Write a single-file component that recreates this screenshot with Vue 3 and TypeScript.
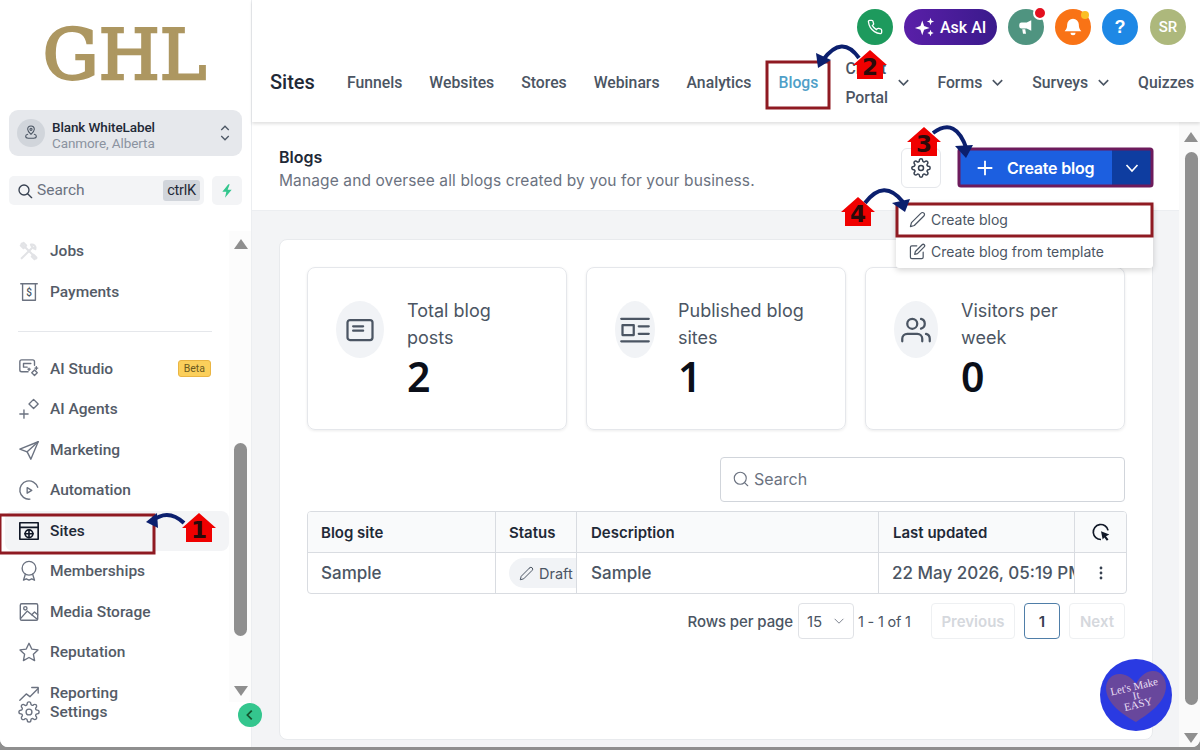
<template>
  <div class="window">
    <div class="app">
      <aside class="sidebar">
        <div class="logo">GHL</div>

        <div class="location">
          <span class="loc-avatar">
            <svg viewBox="0 0 24 24" class="ico-16"><path d="M12 14s5-4 5-7.500a5 5 0 0 0-10 0C7 10 12 14 12 14z" /><circle cx="12" cy="6.500" r="1.600" /><path d="M7 14c-2 .6-3 1.600-3 3 0 2 2 3 4 3h8c2 0 4-1 4-3 0-1.400-1-2.400-3-3" /></svg>
          </span>
          <div class="loc-text">
            <div class="loc-name">Blank WhiteLabel</div>
            <div class="loc-city">Canmore, Alberta</div>
          </div>
          <svg viewBox="0 0 16 24" class="loc-arrows"><path d="M3 8l5-5 5 5M3 16l5 5 5-5" /></svg>
        </div>

        <div class="search-row">
          <div class="side-search">
            <svg viewBox="0 0 24 24" class="ico-16 dark"><circle cx="10.500" cy="10.500" r="7.500" /><path d="M16 16l6 6" /></svg>
            <span class="side-search-label">Search</span>
            <span class="kbd">ctrlK</span>
          </div>
          <div class="bolt">
            <svg viewBox="0 0 24 24" width="16" height="16"><path d="M14 2L5 13h6l-2 9 10-12h-6l3-8z" fill="#34c68e" /></svg>
          </div>
        </div>

        <div class="side-scroll">
          <nav class="side-nav">
            <template v-for="item in navItems" :key="item.label">
              <div v-if="item.divider" class="side-divider"></div>
              <a class="nav-item" :class="{ active: item.active, pale: item.pale, last: item.label === 'Settings' }">
                <svg viewBox="0 0 24 24" class="nav-ico">
                  <path v-for="d in item.paths" :key="d" :d="d" />
                  <circle v-for="c in item.circles" :key="c.join()" :cx="c[0]" :cy="c[1]" :r="c[2]" />
                  <text v-if="item.glyph" x="12" y="16" class="ico-glyph">{{ item.glyph }}</text>
                </svg>
                <span>{{ item.label }}</span>
                <span v-if="item.badge" class="beta">{{ item.badge }}</span>
              </a>
            </template>
          </nav>
          <div class="side-bar">
            <span class="tri up"></span>
            <span class="side-thumb"></span>
            <span class="tri down"></span>
          </div>
        </div>
      </aside>

      <main class="main">
        <header class="header">
          <div class="top-icons">
            <span class="round phone">
              <svg viewBox="0 0 24 24" width="16" height="16"><path d="M22 16.920v3a2 2 0 0 1-2.180 2 19.790 19.790 0 0 1-8.630-3.070 19.500 19.500 0 0 1-6-6 19.790 19.790 0 0 1-3.070-8.670A2 2 0 0 1 4.110 2h3a2 2 0 0 1 2 1.720 12.840 12.840 0 0 0 .7 2.810 2 2 0 0 1-.45 2.110L8.090 9.910a16 16 0 0 0 6 6l1.270-1.270a2 2 0 0 1 2.110-.45 12.840 12.840 0 0 0 2.810.7A2 2 0 0 1 22 16.920z" fill="none" stroke="#fff" stroke-width="2" /></svg>
            </span>
            <span class="ask-ai">
              <svg viewBox="0 0 24 24" width="22" height="22" fill="#fff"><path d="M9 5l2 6 6 2-6 2-2 6-2-6-6-2 6-2z" /><path d="M18 2l1 3 3 1-3 1-1 3-1-3-3-1 3-1zM18 15l1 2.500 2.500 1-2.500 1-1 2.500-1-2.500-2.500-1 2.500-1z" /></svg>
              Ask AI
            </span>
            <span class="round mega">
              <svg viewBox="0 0 24 24" width="18" height="18" fill="#fff"><path d="M19 3v14l-6-3H6a3 3 0 0 1-3-3V9a3 3 0 0 1 3-3h7z" /><path d="M7 15h4l1 6H8z" /></svg>
              <i class="dot red"></i>
            </span>
            <span class="round bell">
              <svg viewBox="0 0 24 24" width="20" height="20" fill="#fff"><path d="M12 2a7 7 0 0 0-7 7c0 5-2 7-3 8h20c-1-1-3-3-3-8a7 7 0 0 0-7-7z" /><path d="M9 19a3 3 0 0 0 6 0z" /></svg>
              <i class="dot yellow"></i>
            </span>
            <span class="round help">?</span>
            <span class="round user">SR</span>
          </div>
          <div class="tabs">
            <span class="tabs-title">Sites</span>
            <a v-for="tab in tabs" :key="tab.label" class="tab" :class="{ current: tab.label === 'Blogs' }" :style="tab.width ? { width: tab.width + 'px' } : undefined">
              <span>{{ tab.label }}</span>
              <svg v-if="tab.menu" viewBox="0 0 16 16" class="tab-chev"><path d="M3 5.500l5 5 5-5" /></svg>
            </a>
          </div>
        </header>

        <div class="scroller">
          <div class="content">
            <section class="page-head">
              <div>
                <h1>Blogs</h1>
                <p>Manage and oversee all blogs created by you for your business.</p>
              </div>
              <div class="head-actions">
                <button class="gear-btn">
                  <svg viewBox="0 0 24 24" class="ico-20 dark"><circle cx="12" cy="12" r="3" /><path :d="gear" /></svg>
                </button>
                <div class="create">
                  <button class="create-main">
                    <svg viewBox="0 0 24 24" width="22" height="22"><path d="M12 4v16M4 12h16" stroke="#fff" stroke-width="2" fill="none" /></svg>
                    Create blog
                  </button>
                  <button class="create-more">
                    <svg viewBox="0 0 16 16" width="16" height="16"><path d="M2.500 5l5.500 6 5.500-6" stroke="#fff" stroke-width="1.600" fill="none" /></svg>
                  </button>
                </div>
                <div class="menu">
                  <a class="menu-item">
                    <svg viewBox="0 0 24 24" class="ico-17"><path d="M17 3a2.830 2.830 0 1 1 4 4L7.500 20.500 2 22l1.500-5.500L17 3z" /></svg>
                    Create blog
                  </a>
                  <a class="menu-item">
                    <svg viewBox="0 0 24 24" class="ico-17"><path d="M11 4H4a2 2 0 0 0-2 2v14a2 2 0 0 0 2 2h14a2 2 0 0 0 2-2v-7" /><path d="M18.500 2.500a2.120 2.120 0 0 1 3 3L12 15l-4 1 1-4 9.500-9.500z" /></svg>
                    Create blog from template
                  </a>
                </div>
              </div>
            </section>

            <section class="panel">
              <div class="stats">
                <div v-for="stat in stats" :key="stat.title" class="stat">
                  <span class="stat-ico" :style="{ width: stat.iconWidth + 'px' }">
                    <svg viewBox="0 0 24 24" class="ico-30">
                      <path v-for="d in stat.paths" :key="d" :d="d" />
                      <circle v-if="stat.circle" cx="9" cy="7" r="4" />
                    </svg>
                  </span>
                  <div class="stat-text">
                    <div class="stat-title">{{ stat.title }}</div>
                    <div class="stat-value">{{ stat.value }}</div>
                  </div>
                </div>
              </div>

              <div class="search-wrap">
                <div class="search-box">
                  <svg viewBox="0 0 24 24" class="ico-18 grey"><circle cx="11" cy="11" r="8" /><path d="M21 21l-4.300-4.300" /></svg>
                  <span>Search</span>
                </div>
              </div>

              <table class="blogs">
                <colgroup>
                  <col style="width: 188px" />
                  <col style="width: 81px" />
                  <col style="width: 302px" />
                  <col style="width: 196px" />
                  <col style="width: 51px" />
                </colgroup>
                <thead>
                  <tr>
                    <th>Blog site</th>
                    <th class="tight">Status</th>
                    <th class="wide">Description</th>
                    <th class="wide">Last updated</th>
                    <th class="center">
                      <svg viewBox="0 0 24 24" width="20" height="20"><path d="M20.500 10A9 9 0 1 0 12 21" fill="none" stroke="#111827" stroke-width="2" /><path d="M12 11l10 4-4 2 3 4-2 1.500-3-4-2 2.500z" fill="#111827" /></svg>
                    </th>
                  </tr>
                </thead>
                <tbody>
                  <tr>
                    <td>Sample</td>
                    <td class="tight">
                      <div class="clip">
                        <span class="pill">
                          <svg viewBox="0 0 24 24" class="ico-15"><path d="M17 3a2.830 2.830 0 1 1 4 4L7.500 20.500 2 22l1.500-5.500L17 3z" /></svg>
                          Draft
                        </span>
                      </div>
                    </td>
                    <td class="wide">Sample</td>
                    <td class="nowrap">22 May 2026, 05:19 PM</td>
                    <td class="center">
                      <svg viewBox="0 0 16 16" width="16" height="16" fill="#374151"><circle cx="8" cy="3" r="1.400" /><circle cx="8" cy="8" r="1.400" /><circle cx="8" cy="13" r="1.400" /></svg>
                    </td>
                  </tr>
                </tbody>
              </table>

              <div class="pager">
                <span class="rows-label">Rows per page</span>
                <span class="rows-select">
                  15
                  <svg viewBox="0 0 16 16" width="14" height="14"><path d="M3 5.500l5 5 5-5" fill="none" stroke="#6b7280" stroke-width="1" /></svg>
                </span>
                <span class="range">1 - 1 of 1</span>
                <button class="page-btn prev">Previous</button>
                <button class="page-num">1</button>
                <button class="page-btn next">Next</button>
              </div>
            </section>
          </div>

          <div class="main-bar">
            <span class="tri up"></span>
            <span class="main-thumb"></span>
            <span class="tri down"></span>
          </div>
        </div>
      </main>
    </div>

    <button class="collapse">
      <svg viewBox="0 0 16 16" width="14" height="14"><path d="M10 3l-5 5 5 5" fill="none" stroke="#14532d" stroke-width="2" /></svg>
    </button>

    <div class="easy">
      <svg viewBox="0 0 72 72" width="72" height="72">
        <path d="M36 63C24 56 6 45 6 29c0-9 7-15 15-14 7 1 12 5 15 10 3-6 8-12 16-13 8-1 14 6 14 15 0 17-18 28-30 36z" fill="#68479c" />
        <g transform="rotate(-13 36 36)" class="easy-text">
          <text x="36" y="31">Let's Make</text>
          <text x="36" y="40">It</text>
          <text x="36" y="49">EASY</text>
        </g>
      </svg>
    </div>

    <!-- tutorial markup drawn on top of the screenshot -->
    <svg class="marks" viewBox="0 0 1200 750">
      <g fill="none" stroke="#8f1a22" stroke-width="3">
        <rect x="0" y="515" width="154" height="38" />
        <rect x="767" y="62" width="62" height="46" />
        <rect x="897" y="204" width="255" height="32" />
      </g>
      <rect x="959" y="149" width="193" height="37" fill="none" stroke="#6d1b5c" stroke-width="3" rx="2" />

      <g v-for="m in markers" :key="m.n">
        <path :d="m.curve" fill="none" stroke="#0b1f6e" stroke-width="4" />
        <path :d="m.head" fill="#0b1f6e" />
        <polygon :points="housePoints(m.x, m.y)" fill="#f00000" />
        <text :x="m.x" :y="m.y + 25" class="mark-num">{{ m.n }}</text>
      </g>
    </svg>
  </div>
</template>

<script setup lang="ts">
interface NavItem {
  label: string
  paths: string[]
  circles?: number[][]
  glyph?: string
  badge?: string
  active?: boolean
  pale?: boolean
  divider?: boolean
}

const gear =
  'M19.400 15a1.650 1.650 0 0 0 .33 1.820l.06.06a2 2 0 0 1 0 2.830 2 2 0 0 1-2.830 0l-.06-.06a1.650 1.650 0 0 0-1.820-.33 1.650 1.650 0 0 0-1 1.510V21a2 2 0 0 1-2 2 2 2 0 0 1-2-2v-.09A1.650 1.650 0 0 0 9 19.400a1.650 1.650 0 0 0-1.820.33l-.06.06a2 2 0 0 1-2.830 0 2 2 0 0 1 0-2.830l.06-.06a1.650 1.650 0 0 0 .33-1.820 1.650 1.650 0 0 0-1.510-1H3a2 2 0 0 1-2-2 2 2 0 0 1 2-2h.09A1.650 1.650 0 0 0 4.600 9a1.650 1.650 0 0 0-.33-1.820l-.06-.06a2 2 0 0 1 0-2.830 2 2 0 0 1 2.830 0l.06.06a1.650 1.650 0 0 0 1.820.33H9a1.650 1.650 0 0 0 1-1.510V3a2 2 0 0 1 2-2 2 2 0 0 1 2 2v.09a1.650 1.650 0 0 0 1 1.510 1.650 1.650 0 0 0 1.820-.33l.06-.06a2 2 0 0 1 2.830 0 2 2 0 0 1 0 2.830l-.06.06a1.650 1.650 0 0 0-.33 1.820V9a1.650 1.650 0 0 0 1.510 1H21a2 2 0 0 1 2 2 2 2 0 0 1-2 2h-.09a1.650 1.650 0 0 0-1.510 1z'

const navItems: NavItem[] = [
  {
    label: 'Jobs',
    pale: true,
    paths: ['M4 20L15 9', 'M14 5a4 4 0 0 1 5 5l-2-1-2-2z', 'M4 4l16 16', 'M3 6l3-3 3 3-3 3z', 'M17 16l3 3-2 2-3-3z'],
  },
  { label: 'Payments', glyph: '$', paths: ['M3 3h18', 'M5 3v18h14V3'] },
  {
    label: 'AI Studio',
    divider: true,
    badge: 'Beta',
    paths: ['M11 15H4a2 2 0 0 1-2-2V4a2 2 0 0 1 2-2h12a2 2 0 0 1 2 2v4', 'M6 6h8M6 6v4h4', 'M15 16l3-3 3 3-3 3z', 'M20 9.500v3M18.500 11h3', 'M12 11v2.500M10.800 12.200h2.500'],
  },
  { label: 'AI Agents', paths: ['M2 17.500h9M6.500 13v9', 'M17 1.500l5 5-5 5-5-5z'] },
  { label: 'Marketing', paths: ['M22 3L2 11l8 3 4 8z', 'M22 3L10 14'] },
  {
    label: 'Automation',
    paths: ['M21.500 9A10 10 0 1 0 13 22', 'M10 9.500l5 3-5 3z'],
  },
  {
    label: 'Sites',
    active: true,
    paths: ['M2 3h20v18H2z', 'M2 8h20', 'M7.500 15h9M12 11v8'],
    circles: [[12, 15, 4.2]],
  },
  {
    label: 'Memberships',
    paths: ['M8 15.500L6 22l3-1.500 3 1.500 3-1.500 3 1.500-2-6.500'],
    circles: [[12, 9, 7.5]],
  },
  {
    label: 'Media Storage',
    paths: ['M4 3h16a1.500 1.500 0 0 1 1.500 1.500v15A1.500 1.500 0 0 1 20 21H4a1.500 1.500 0 0 1-1.500-1.500v-15A1.500 1.500 0 0 1 4 3z', 'M3 19l7-8 11 9', 'M15 15l3-3 3.500 3'],
    circles: [[8, 8, 1.8]],
  },
  {
    label: 'Reputation',
    paths: ['M12 2.500l3 6.300 6.800.9-5 4.800 1.300 6.800-6.100-3.300-6.100 3.300 1.300-6.800-5-4.800 6.800-.9z'],
  },
  { label: 'Reporting', paths: ['M2 20l7-7 4 3 9-9', 'M15 6h7v6'] },
  { label: 'Settings', paths: [gear], circles: [[12, 12, 3.2]] },
]

const tabs = [
  { label: 'Funnels' },
  { label: 'Websites' },
  { label: 'Stores' },
  { label: 'Webinars' },
  { label: 'Analytics' },
  { label: 'Blogs' },
  { label: 'Client Portal', menu: true, width: 65 },
  { label: 'Forms', menu: true },
  { label: 'Surveys', menu: true },
  { label: 'Quizzes' },
]

const stats = [
  {
    title: 'Total blog posts',
    value: 2,
    iconWidth: 48,
    paths: ['M4 4h16a2 2 0 0 1 2 2v12a2 2 0 0 1-2 2H4a2 2 0 0 1-2-2V6a2 2 0 0 1 2-2z', 'M6.500 9h8M6.500 12.500h8'],
  },
  {
    title: 'Published blog sites',
    value: 1,
    iconWidth: 40,
    paths: ['M1 3h22M1 21h22', 'M2 8h9v8H2z', 'M15 9h8M15 15h8'],
  },
  {
    title: 'Visitors per week',
    value: 0,
    iconWidth: 44,
    circle: true,
    paths: ['M17 21v-2a4 4 0 0 0-4-4H5a4 4 0 0 0-4 4v2', 'M23 21v-2a4 4 0 0 0-3-3.870', 'M16 3.130a4 4 0 0 1 0 7.750'],
  },
]

const markers = [
  { n: 1, x: 199, y: 513, curve: 'M184 523Q168 508 152 521', head: 'M146 522l11-9 1 15z' },
  { n: 2, x: 870, y: 50, curve: 'M859 58Q842 34 823 60', head: 'M818 68l-2-15 15 7z' },
  { n: 3, x: 924, y: 127, curve: 'M933 133Q956 116 967 150', head: 'M966 158l-11-12 18-1z' },
  { n: 4, x: 858, y: 197, curve: 'M865 203Q884 178 903 202', head: 'M905 212l-13-9 18-4z' },
]

// little red house shape behind each step number
function housePoints(x: number, y: number): string {
  return [
    [x, y],
    [x + 17, y + 15],
    [x + 13, y + 15],
    [x + 13, y + 29],
    [x - 13, y + 29],
    [x - 13, y + 15],
    [x - 17, y + 15],
  ]
    .map((p) => p.join(','))
    .join(' ')
}
</script>

<style>
html,
body {
  margin: 0;
  background: #8f8f8f;
}
</style>

<style scoped>
.window {
  position: relative;
  width: 1200px;
  height: 750px;
  overflow: hidden;
  background: #8f8f8f;
  font-family: Inter, "Liberation Sans", sans-serif;
}

.app {
  display: flex;
  height: 747px;
  overflow: hidden;
  border-radius: 0 0 8px 8px;
  background: #fff;
}

svg {
  display: block;
  flex: none;
}

.ico-15,
.ico-16,
.ico-17,
.ico-18,
.ico-20,
.ico-30 {
  fill: none;
  stroke: #4b5563;
  stroke-width: 2;
  stroke-linecap: round;
  stroke-linejoin: round;
}

.ico-15 { width: 15px; height: 15px; stroke-width: 1.600; }
.ico-16 { width: 16px; height: 16px; }
.ico-17 { width: 17px; height: 17px; stroke-width: 1.700; }
.ico-18 { width: 18px; height: 18px; }
.ico-20 { width: 20px; height: 20px; stroke-width: 1.800; }
.ico-30 { width: 30px; height: 30px; stroke-width: 1.800; }
.dark { stroke: #374151; }
.grey { stroke: #6b7280; stroke-width: 1.500; }

/* sidebar */
.sidebar {
  width: 251px;
  flex: none;
  display: flex;
  flex-direction: column;
  background: #fff;
  font-family: Roboto, "Liberation Sans", sans-serif;
}

.logo {
  height: 110px;
  padding-right: 2px;
  text-align: center;
  font-family: "DejaVu Serif", serif;
  font-size: 70px;
  line-height: 110px;
  color: #ad9761;
  -webkit-text-stroke: 2.600px #ad9761;
}

.location {
  display: flex;
  align-items: center;
  height: 46px;
  margin: 0 9px;
  padding: 0 8px;
  border-radius: 9px;
  background: #e6e8ec;
}

.loc-avatar {
  width: 28px;
  height: 28px;
  display: flex;
  align-items: center;
  justify-content: center;
  border-radius: 50%;
  background: #d1d5db;
}

.loc-avatar .ico-16 {
  stroke-width: 1.600;
}

.loc-text {
  flex: 1;
  margin: 4px 0 0 7px;
  line-height: 16px;
}

.loc-name {
  font-size: 13.500px;
  font-weight: 500;
  letter-spacing: -0.1px;
  color: #1f2937;
}

.loc-city {
  font-size: 13.500px;
  letter-spacing: -0.1px;
  color: #8b93a0;
}

.loc-arrows {
  width: 12px;
  height: 20px;
  margin-right: 3px;
  fill: none;
  stroke: #4b5563;
  stroke-width: 1.700;
}

.search-row {
  display: flex;
  gap: 8px;
  margin: 20px 9px 0;
}

.side-search {
  flex: 1;
  height: 29px;
  display: flex;
  align-items: center;
  padding: 0 4px 0 8px;
  border-radius: 5px;
  background: #f3f4f6;
}

.side-search-label {
  flex: 1;
  margin: 0 0 2px 4px;
  font-size: 15.500px;
  color: #6b7280;
}

.kbd {
  padding: 2px 4px;
  border-radius: 3px;
  background: #d1d5db;
  font-size: 14.500px;
  letter-spacing: -0.2px;
  color: #1f2937;
}

.bolt {
  width: 30px;
  height: 29px;
  display: flex;
  align-items: center;
  justify-content: center;
  border-radius: 5px;
  background: #f3f4f6;
}

.side-scroll {
  flex: 1;
  min-height: 0;
  display: flex;
  margin-top: 26px;
}

.side-nav {
  flex: 1;
  min-width: 0;
  padding: 0 0 0 5px;
}

.nav-item {
  display: flex;
  align-items: center;
  height: 40.500px;
  padding: 0 18px 0 13px;
  border-radius: 8px;
  font-size: 15.500px;
  font-weight: 500;
  color: #545b67;
}

.nav-item > span:first-of-type {
  margin-left: 10px;
  flex: 1;
}

.nav-item.active {
  background: #f3f4f6;
  color: #1f2937;
}

.nav-item.active .nav-ico {
  stroke: #111827;
  stroke-width: 1.800;
}

.nav-item.pale .nav-ico {
  stroke: #e2e3e6;
  stroke-width: 2.200;
}

.nav-item.last {
  margin-top: -21.500px;
}

.nav-ico {
  width: 22px;
  height: 22px;
  fill: none;
  stroke: #6b7280;
  stroke-width: 1.500;
  stroke-linecap: round;
  stroke-linejoin: round;
}

.ico-glyph {
  font-family: Roboto, sans-serif;
  font-size: 11px;
  font-weight: 500;
  text-anchor: middle;
  fill: #4b5563;
  stroke: none;
}

.side-divider {
  height: 1px;
  margin: 19px 17px 16.600px 13px;
  background: #e5e7eb;
}

.beta {
  padding: 1px 5px;
  border: 1px solid #eab543;
  border-radius: 3px;
  background: #fbcf5b;
  font-size: 10.500px;
  font-weight: 400;
  color: #6b5a20;
}

.side-bar {
  width: 22px;
  flex: none;
  display: flex;
  flex-direction: column;
  align-items: center;
  padding: 8px 0 0 1px;
  background: #fcfcfc;
  height: 471px;
  box-sizing: border-box;
}

.tri {
  width: 0;
  height: 0;
  flex: none;
  border-left: 7px solid transparent;
  border-right: 7px solid transparent;
}

.tri.up { border-bottom: 10px solid #8f8f8f; }
.tri.down { border-top: 10px solid #8f8f8f; }

.side-thumb {
  width: 13px;
  height: 193px;
  margin: 194px 0 50px;
  flex: none;
  border-radius: 7px;
  background: #8f8f8f;
}

.collapse {
  position: absolute;
  left: 238px;
  top: 703px;
  width: 24px;
  height: 24px;
  padding: 0;
  display: flex;
  align-items: center;
  justify-content: center;
  border: 0;
  border-radius: 50%;
  background: #34c68e;
}

/* header */
.main {
  flex: 1;
  min-width: 0;
  display: flex;
  flex-direction: column;
  border-left: 1px solid #eceef1;
}

.header {
  height: 122px;
  flex: none;
  position: relative;
  z-index: 1;
  background: #fff;
  box-shadow: 0 2px 3px rgba(0, 0, 0, 0.12);
}

.top-icons {
  height: 54px;
  display: flex;
  align-items: center;
  justify-content: flex-end;
  gap: 11px;
  padding-right: 14px;
}

.round {
  position: relative;
  width: 36px;
  height: 36px;
  display: flex;
  align-items: center;
  justify-content: center;
  border-radius: 50%;
  color: #fff;
  font-family: Roboto, sans-serif;
  font-weight: 500;
}

.phone { background: #1d9a5d; }
.mega { background: #4f9480; }
.bell { background: #f97316; }
.help { background: #1e88e5; font-size: 18px; font-weight: 700; font-family: "Liberation Sans", sans-serif; }
.user { background: #adb87c; font-size: 15px; margin-left: 1px; }

.dot {
  position: absolute;
  border-radius: 50%;
}

.dot.red {
  top: -3px;
  right: -3px;
  width: 10px;
  height: 10px;
  border: 2px solid #fff;
  background: #e3101f;
}

.dot.yellow {
  top: 2px;
  right: 2px;
  width: 8px;
  height: 8px;
  background: #fbbf24;
}

.ask-ai {
  width: 93px;
  height: 36px;
  box-sizing: border-box;
  display: flex;
  align-items: center;
  gap: 4px;
  padding-left: 10px;
  border-radius: 18px;
  background: linear-gradient(90deg, #5a1fa8, #3a1a8c);
  color: #fff;
  font-family: Roboto, sans-serif;
  font-size: 16px;
  font-weight: 500;
}

.tabs {
  height: 56px;
  display: flex;
  align-items: center;
  gap: 27px;
  padding-left: 18px;
  font-family: Roboto, "Liberation Sans", sans-serif;
  white-space: nowrap;
}

.tabs-title {
  width: 50px;
  font-size: 20px;
  font-weight: 500;
  color: #1f2937;
}

.tab {
  display: flex;
  align-items: center;
  font-size: 15.750px;
  font-weight: 500;
  color: #4b5563;
}

.tab span {
  white-space: normal;
  line-height: 29px;
  padding-top: 1px;
}

.tab.current {
  color: #4f9fc8;
}

.tab-chev {
  width: 15px;
  height: 15px;
  margin-left: 8px;
  fill: none;
  stroke: #4b5563;
  stroke-width: 1.700;
}

/* content */
.scroller {
  flex: 1;
  min-height: 0;
  display: flex;
}

.content {
  width: 927px;
  flex: none;
  background: #f3f4f6;
}

.page-head {
  height: 89px;
  box-sizing: border-box;
  display: flex;
  justify-content: space-between;
  padding: 26px 27px 0 27px;
  border-bottom: 1px solid #eceef1;
  background: #fff;
}

.page-head h1 {
  margin: 0;
  font-size: 16px;
  font-weight: 600;
  line-height: 18px;
  color: #1f2937;
}

.page-head p {
  margin: 6px 0 0;
  font-size: 15.500px;
  letter-spacing: 0.12px;
  line-height: 18px;
  color: #6b7280;
}

.head-actions {
  position: relative;
  display: flex;
  gap: 19px;
  height: 40px;
}

.gear-btn {
  width: 40px;
  height: 40px;
  display: flex;
  align-items: center;
  justify-content: center;
  padding: 0;
  border: 1px solid #e5e7eb;
  border-radius: 6px;
  background: #fff;
}

.create {
  width: 192px;
  height: 38px;
  display: flex;
  margin-top: 1px;
}

.create button {
  height: 100%;
  display: flex;
  align-items: center;
  border: 0;
  font-family: inherit;
}

.create-main {
  flex: 1;
  gap: 11px;
  padding: 0 0 0 14px;
  background: #1c5fe0;
  color: #fff;
  font-size: 16px;
  font-weight: 600;
  letter-spacing: -0.2px;
}

.create-more {
  width: 40px;
  justify-content: center;
  background: #0e3da0;
}

.menu {
  position: absolute;
  top: 55px;
  right: -1px;
  width: 257px;
  box-sizing: border-box;
  border-radius: 3px;
  background: #fff;
  box-shadow: 0 2px 6px rgba(0, 0, 0, 0.18);
}

.menu::before {
  content: "";
  position: absolute;
  top: -4px;
  right: 14px;
  width: 9px;
  height: 9px;
  background: #fff;
  transform: rotate(45deg);
}

.menu-item {
  position: relative;
  height: 32.500px;
  display: flex;
  align-items: center;
  gap: 5px;
  padding-left: 13px;
  font-size: 14px;
  color: #4b5563;
}

.panel {
  height: 501px;
  box-sizing: border-box;
  margin: 28px 26px 0 27px;
  padding: 27px 27px 0;
  border: 1px solid #e8eaed;
  border-radius: 8px;
  background: #fff;
}

.stats {
  display: flex;
  gap: 19px;
}

.stat {
  width: 260px;
  height: 163px;
  box-sizing: border-box;
  display: flex;
  gap: 23px;
  padding: 33px 20px 0 28px;
  border: 1px solid #e5e7eb;
  border-radius: 8px;
  box-shadow: 0 1px 3px rgba(0, 0, 0, 0.08);
}

.stat-ico {
  height: 57px;
  flex: none;
  display: flex;
  align-items: center;
  justify-content: center;
  border-radius: 50%;
  background: #f1f3f6;
}

.stat-text {
  margin-top: -4px;
}

.stat-title {
  max-width: 130px;
  font-size: 18px;
  line-height: 27px;
  color: #4b5563;
}

.stat-value {
  font-family: "Noto Sans", sans-serif;
  font-size: 41px;
  font-weight: 600;
  line-height: 50px;
  color: #0b0f19;
}

.search-wrap {
  display: flex;
  justify-content: flex-end;
  margin-top: 27px;
}

.search-box {
  width: 405px;
  height: 45px;
  box-sizing: border-box;
  display: flex;
  align-items: center;
  gap: 4px;
  padding: 0 0 2px 11px;
  border: 1px solid #d1d5db;
  border-radius: 4px;
  font-size: 16px;
  color: #6b7280;
}

.blogs {
  width: 818px;
  margin-top: 9px;
  table-layout: fixed;
  border-collapse: separate;
  border-spacing: 0;
  border: 1px solid #d9dce1;
  border-radius: 4px;
  overflow: hidden;
}

.blogs th,
.blogs td {
  box-sizing: border-box;
  padding: 0 13px;
  overflow: hidden;
  text-align: left;
  border-right: 1px solid #d9dce1;
}

.blogs th:last-child,
.blogs td:last-child {
  border-right: 0;
}

.blogs th {
  height: 41px;
  border-bottom: 1px solid #d9dce1;
  background: #f9fafb;
  font-size: 15px;
  font-weight: 600;
  color: #1f2937;
}

.blogs td {
  height: 40px;
  font-size: 17px;
  font-weight: 500;
  color: #4b5563;
}

.blogs .tight {
  padding: 0 0 0 13px;
}

.blogs .wide {
  padding-left: 14px;
}

.blogs .center {
  padding: 0;
}

.blogs .center svg {
  margin: 0 auto;
}

.nowrap {
  white-space: nowrap;
}

.clip {
  overflow: hidden;
}

.pill {
  width: 80px;
  height: 30px;
  display: flex;
  align-items: center;
  gap: 5px;
  padding-left: 10px;
  box-sizing: border-box;
  border-radius: 15px;
  background: #f1f3f6;
  font-size: 14.500px;
  font-weight: 400;
}

.pager {
  display: flex;
  align-items: center;
  margin-top: 9px;
  height: 36px;
  justify-content: flex-end;
  font-size: 15px;
  font-weight: 500;
  color: #4b5563;
}

.rows-label {
  letter-spacing: -0.1px;
}

.rows-select {
  width: 56px;
  height: 36px;
  box-sizing: border-box;
  display: flex;
  align-items: center;
  justify-content: space-between;
  margin-left: 5px;
  padding: 0 7px 0 8px;
  border: 1px solid #e0e2e6;
  border-radius: 4px;
  font-weight: 400;
  font-size: 15px;
}

.range {
  width: 56px;
  margin: 0 17px 0 4px;
  font-size: 14.500px;
  font-weight: 400;
  white-space: nowrap;
  letter-spacing: -0.2px;
}

.pager button {
  height: 36px;
  padding: 0;
  border-radius: 4px;
  background: #fff;
  font-family: inherit;
  font-size: 15px;
  font-weight: 600;
}

.page-btn {
  border: 1px solid #eef0f2;
  color: #d5d8dd;
}

.prev { width: 84px; }
.next { width: 56px; }

.page-num {
  width: 36px;
  margin: 0 9px;
  border: 1px solid #4f7ea8;
  color: #374151;
}

.main-bar {
  width: 21px;
  flex: 1;
  box-sizing: border-box;
  display: flex;
  flex-direction: column;
  align-items: center;
  padding: 10px 0 0 3px;
  background: #fafafa;
}

.main-thumb {
  width: 13px;
  height: 553px;
  margin: 10px 0 28px;
  flex: none;
  border-radius: 7px;
  background: #8f8f8f;
}

/* floating badge */
.easy {
  position: absolute;
  left: 1100px;
  top: 659px;
  width: 72px;
  height: 72px;
  border-radius: 50%;
  background: #2a3ae2;
}

.easy-text text {
  font-family: "Liberation Serif", serif;
  font-size: 11px;
  text-anchor: middle;
  fill: #e9dff5;
}

/* annotation layer */
.marks {
  position: absolute;
  left: 0;
  top: 0;
  z-index: 5;
  width: 1200px;
  height: 750px;
  pointer-events: none;
}

.mark-num {
  font-family: "DejaVu Sans", sans-serif;
  font-size: 23px;
  font-weight: 700;
  text-anchor: middle;
  fill: #2a0a0a;
}
</style>
